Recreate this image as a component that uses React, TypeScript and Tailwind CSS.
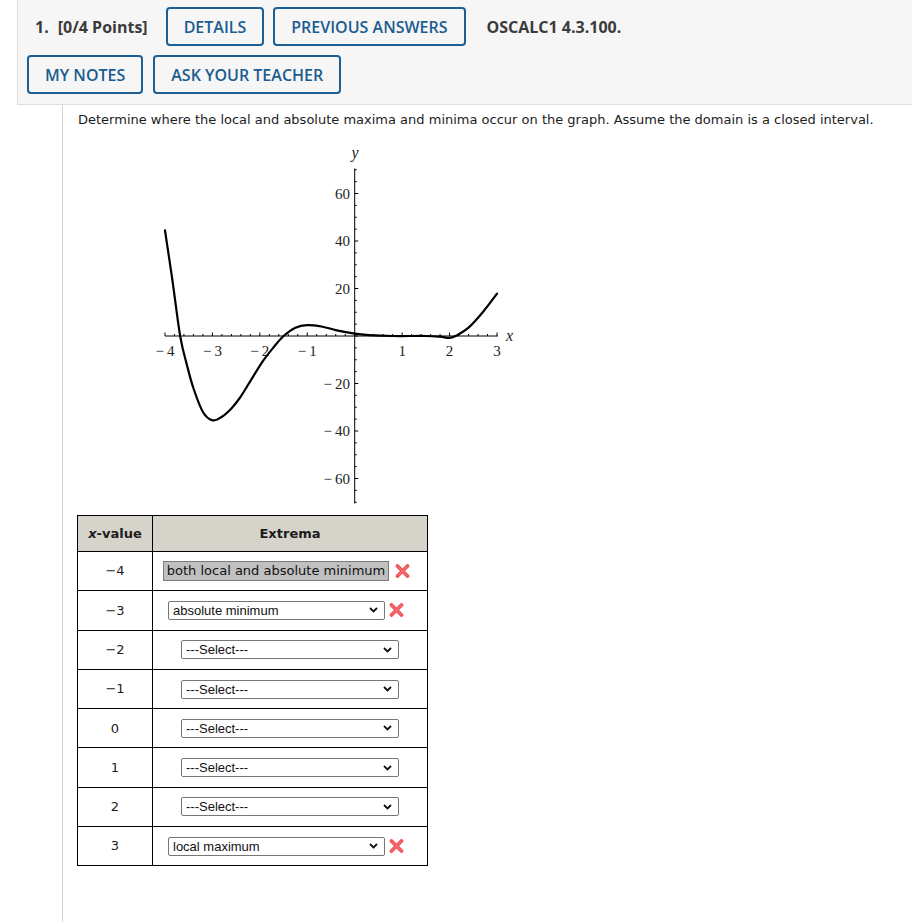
import React from "react";

const SX = (x: number) => 354.7 + x * 47.43;
const SY = (y: number) => 335 - y * 2.375;

// points read off the plotted curve
const curvePts: [number, number][] = [
  [-4, 44.5], [-3.84, 23], [-3.68, 0], [-3.54, -12], [-3.4, -22], [-3.2, -32],
  [-3.0, -35.5], [-2.8, -34], [-2.6, -30.5], [-2.42, -26], [-2.2, -19], [-1.95, -11],
  [-1.72, -5], [-1.5, 0], [-1.25, 3.5], [-1.0, 4.6], [-0.7, 4], [-0.4, 2.5], [0, 1],
  [0.3, 0.4], [0.8, 0], [1.5, 0], [1.8, -0.3], [2.0, -0.8], [2.15, 0.2], [2.4, 3.5],
  [2.7, 10], [3.0, 17.8],
];

function curvePath() {
  const p = curvePts.map(([x, y]) => [SX(x), SY(y)]);
  const f = (n: number) => n.toFixed(2);
  let d = `M${f(p[0][0])},${f(p[0][1])}`;
  for (let i = 0; i < p.length - 1; i++) {
    const p0 = p[i - 1] || p[i];
    const p1 = p[i];
    const p2 = p[i + 1];
    const p3 = p[i + 2] || p2;
    const c1x = p1[0] + (p2[0] - p0[0]) / 6;
    const c1y = p1[1] + (p2[1] - p0[1]) / 6;
    const c2x = p2[0] - (p3[0] - p1[0]) / 6;
    const c2y = p2[1] - (p3[1] - p1[1]) / 6;
    d += ` C${f(c1x)},${f(c1y)} ${f(c2x)},${f(c2y)} ${f(p2[0])},${f(p2[1])}`;
  }
  return d;
}

const label = (t: number) => (t < 0 ? "\u2212\u2009" + Math.abs(t) : String(t));

const Graph = () => {
  const xTicks: number[] = [];
  for (let i = -20; i <= 15; i++) xTicks.push(i / 5);
  const yTicks: number[] = [];
  for (let i = -14; i <= 14; i++) yTicks.push(i * 5);
  const font = { fontFamily: "'Liberation Serif', serif" };

  return (
    <svg width="450" height="370" viewBox="78 140 450 370" className="block mt-[13px]">
      {/* axes */}
      <line x1={SX(-4)} y1={SY(0)} x2={SX(3.02)} y2={SY(0)} stroke="#000" strokeWidth="1" />
      <line x1={SX(0)} y1={SY(70.5)} x2={SX(0)} y2={SY(-70.5)} stroke="#000" strokeWidth="1" />
      {xTicks.map((t) => {
        const major = Math.abs(t - Math.round(t)) < 1e-6;
        return (
          <line key={"x" + t} x1={SX(t)} y1={SY(0)} x2={SX(t)} y2={SY(0) - (major ? 3.5 : 2)} stroke="#000" strokeWidth="1" />
        );
      })}
      {yTicks.map((t) => {
        const major = t % 20 === 0;
        return (
          <line key={"y" + t} x1={SX(0)} y1={SY(t)} x2={SX(0) + (major ? 3.5 : 2)} y2={SY(t)} stroke="#000" strokeWidth="1" />
        );
      })}
      {[-4, -3, -2, -1, 1, 2, 3].map((t) => (
        <text key={"xl" + t} x={SX(t)} y={355} textAnchor="middle" fontSize="15" fill="#222" style={font}>
          {label(t)}
        </text>
      ))}
      {[60, 40, 20, -20, -40, -60].map((t) => (
        <text key={"yl" + t} x={350} y={SY(t) + 5} textAnchor="end" fontSize="15" fill="#222" style={font}>
          {label(t)}
        </text>
      ))}
      <text x={506} y={340} fontSize="16" fontStyle="italic" fill="#222" style={font}>x</text>
      <text x={355} y={157} fontSize="16" fontStyle="italic" textAnchor="middle" fill="#222" style={font}>y</text>
      <path d={curvePath()} fill="none" stroke="#000" strokeWidth="2.2" strokeLinecap="round" />
    </svg>
  );
};

const WrongMark = () => (
  <svg width="15" height="14" viewBox="0 0 15 14" className="shrink-0">
    <path d="M2.5 2 L12.5 12 M12.5 2 L2.5 12" stroke="#f05358" strokeWidth="3.8" strokeLinecap="round" />
    <path d="M3 2.5 L12 11.5 M12 2.5 L3 11.5" stroke="#ff9a9d" strokeWidth="1" strokeLinecap="round" opacity="0.7" />
  </svg>
);

const Chevron = () => (
  <svg width="9" height="6" viewBox="0 0 9 6" className="shrink-0">
    <path d="M1 1 L4.5 4.5 L8 1" fill="none" stroke="#111" strokeWidth="1.8" />
  </svg>
);

const FakeSelect = ({ text, wide }: { text: string; wide?: boolean }) => (
  <div
    className={
      "h-[19px] flex items-center justify-between pl-[4px] pr-[6px] bg-white border border-[#767676] rounded-[2px] text-[13px] text-[#111] font-['Liberation_Sans',Arial,sans-serif] " +
      (wide ? "w-[218px]" : "w-[217px]")
    }
  >
    <span className="leading-none">{text}</span>
    <Chevron />
  </div>
);

type Row = { x: string; text?: string; answered?: boolean; wrong?: boolean };

const rows: Row[] = [
  { x: "\u22124", text: "both local and absolute minimum", answered: true, wrong: true },
  { x: "\u22123", text: "absolute minimum", wrong: true },
  { x: "\u22122" },
  { x: "\u22121" },
  { x: "0" },
  { x: "1" },
  { x: "2" },
  { x: "3", text: "local maximum", wrong: true },
];

const Button = ({ label }: { label: string }) => (
  <button className="h-[39px] px-4 border-2 border-[#1b5f95] rounded-[4px] text-[#1b5c90] text-[16px] font-semibold tracking-normal">
    {label}
  </button>
);

export default function App() {
  return (
    <div className="min-h-screen flex flex-col bg-white font-['Open_Sans',sans-serif]">
      <div className="ml-[17px] h-[105px] bg-[#f6f6f6] border-l border-b border-[#dedede] pt-[7px] pl-[9px] flex flex-col gap-[9px]">
        <div className="flex items-center h-[39px]">
          <span className="pl-[8px] text-[16px] font-bold text-[#3b3b3b]">1.</span>
          <span className="ml-[9px] mr-[18px] text-[16px] font-bold text-[#3b3b3b]">[0/4 Points]</span>
          <div className="flex gap-[9px]">
            <Button label="DETAILS" />
            <Button label="PREVIOUS ANSWERS" />
          </div>
          <span className="ml-[21px] text-[16px] font-bold text-[#3b3b3b]">OSCALC1 4.3.100.</span>
        </div>
        <div className="flex gap-[10px] h-[39px]">
          <Button label="MY NOTES" />
          <Button label="ASK YOUR TEACHER" />
        </div>
      </div>

      <div className="flex-1 ml-[62px] border-l border-[#d4d4d4] pl-[15px] pt-[7px] pb-[40px] font-['DejaVu_Sans',Verdana,sans-serif] text-[#1c1c1c]">
        <p className="text-[13px] leading-[16px]">
          Determine where the local and absolute maxima and minima occur on the graph. Assume the domain is a closed interval.
        </p>

        <Graph />

        <div className="mt-[4px] -ml-px w-[351px] border border-black text-[13px]">
          <div className="flex h-[35px] bg-[#d6d3ca] font-bold">
            <div className="w-[75px] border-r border-black flex items-center justify-center">
              <span><i>x</i>-value</span>
            </div>
            <div className="flex-1 flex items-center justify-center">Extrema</div>
          </div>
          {rows.map((r, i) => (
            <div key={i} className="flex h-[39.3px] border-t border-black">
              <div className="w-[75px] border-r border-black flex items-center justify-center">{r.x}</div>
              <div className="flex-1 flex items-center justify-center">
                {r.answered ? (
                  <div className="flex items-center gap-[6px] ml-[-7px]">
                    <div className="h-[20px] px-[3px] flex items-center bg-[#c0c0c0] border border-[#7a7a7a] text-[13px] text-[#111] whitespace-nowrap">
                      {r.text}
                    </div>
                    <WrongMark />
                  </div>
                ) : r.wrong ? (
                  <div className="flex items-center gap-[4px] ml-[-8px]">
                    <FakeSelect text={r.text || ""} />
                    <WrongMark />
                  </div>
                ) : (
                  <FakeSelect text="---Select---" wide />
                )}
              </div>
            </div>
          ))}
        </div>
      </div>
    </div>
  );
}
